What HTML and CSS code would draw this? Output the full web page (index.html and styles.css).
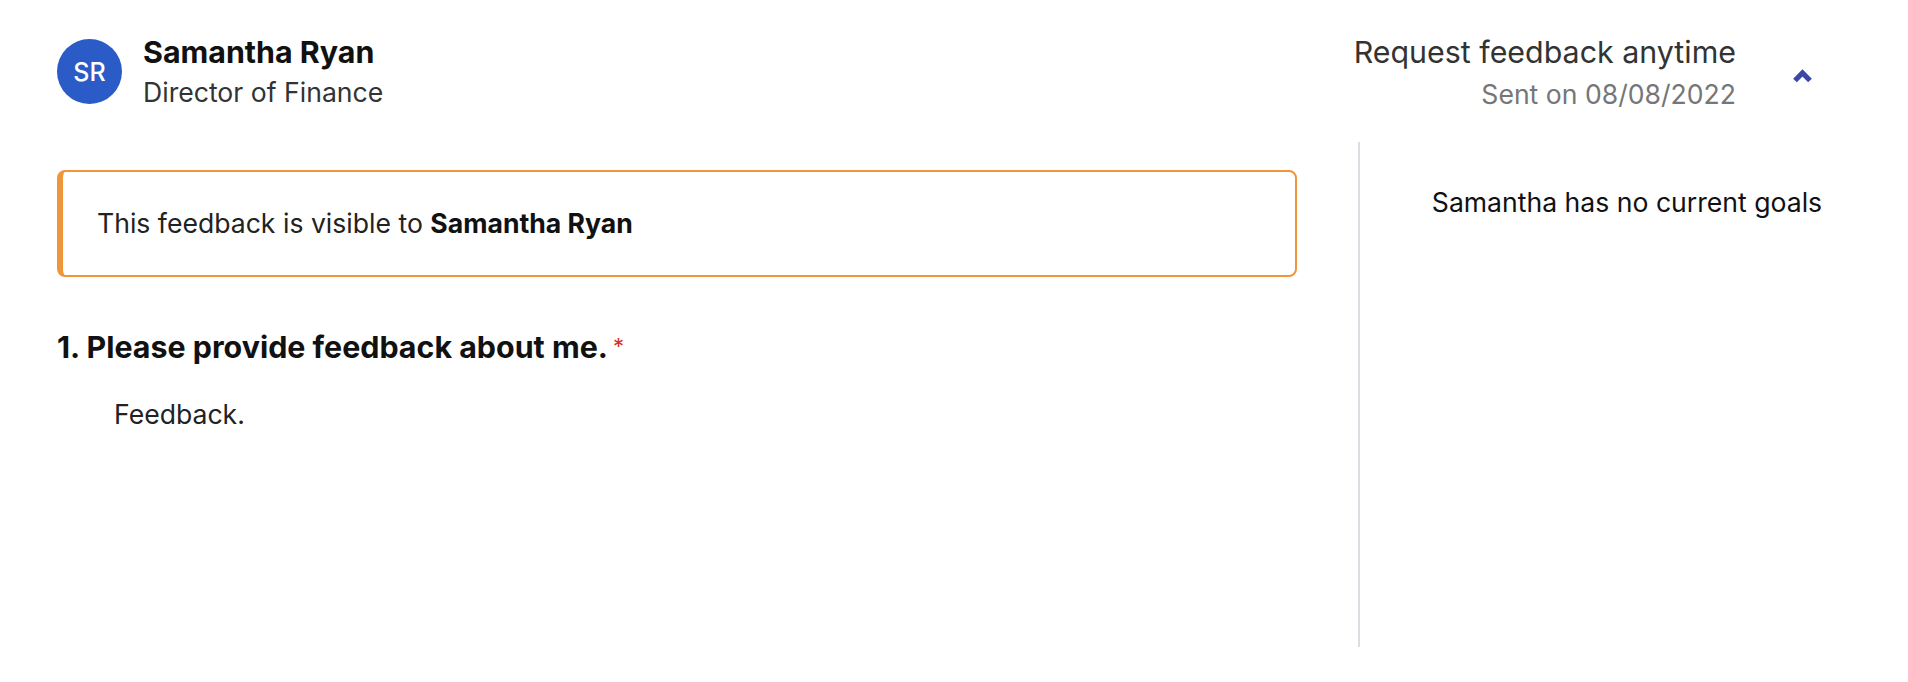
FILE: index.html
```html
<!DOCTYPE html>
<html lang="en">
<head>
<meta charset="utf-8">
<title>Feedback</title>
<link rel="stylesheet" href="styles.css">
</head>
<body>
<div class="page">
  <header class="header">
    <div class="person">
      <div class="avatar">SR</div>
      <div class="person-text">
        <div class="name">Samantha Ryan</div>
        <div class="role">Director of Finance</div>
      </div>
    </div>
    <div class="request">
      <div class="request-text">
        <div class="request-title">Request feedback anytime</div>
        <div class="request-date">Sent on 08/08/2022</div>
      </div>
      <button class="toggle" type="button" aria-label="Collapse">
        <svg width="21" height="16" viewBox="0 0 21 16"><path d="M3 13.5 L10.5 6 L18 13.5" fill="none" stroke="#3a46a8" stroke-width="5.2" stroke-linejoin="miter" stroke-linecap="butt"/></svg>
      </button>
    </div>
  </header>
  <main class="content">
    <section class="form">
      <div class="notice">This feedback is visible to <strong>Samantha Ryan</strong></div>
      <div class="question"><span class="question-text">1. Please provide feedback about me.</span><span class="req">*</span></div>
      <p class="answer">Feedback.</p>
    </section>
    <aside class="goals">
      <p class="goals-empty">Samantha has no current goals</p>
    </aside>
  </main>
</div>
</body>
</html>
```

FILE: styles.css
```css
* { box-sizing: border-box; }
body {
  margin: 0;
  background: #fff;
  font-family: Inter, "Open Sans", Arial, sans-serif;
  color: #1a1a1a;
}
.header {
  display: flex;
  justify-content: space-between;
  align-items: flex-start;
  padding: 34px 95px 0 57px;
  height: 110px;
}
.person { display: flex; align-items: center; }
.avatar {
  width: 65px;
  height: 65px;
  border-radius: 50%;
  background: #2b5bc7;
  color: #fff;
  font-size: 25px;
  font-weight: 500;
  display: flex;
  align-items: center;
  justify-content: center;
  margin-right: 21px;
}
.person-text { display: flex; flex-direction: column; align-items: flex-start; }
.name { font-size: 30.4px; line-height: 36px; font-weight: 700; color: #111; }
.role { font-size: 26.6px; line-height: 34px; margin-top: 5px; color: #333; }
.request { display: flex; align-items: center; }
.request-text { display: flex; flex-direction: column; align-items: flex-end; }
.request-title { font-size: 30.4px; line-height: 36px; color: #333; }
.request-date { font-size: 26.6px; line-height: 34px; margin-top: 7px; color: #767676; }
.toggle {
  border: 0;
  background: none;
  padding: 0;
  margin-left: 56px;
  margin-top: 4px;
  width: 21px;
  height: 16px;
  display: flex;
  cursor: pointer;
}
.content {
  display: flex;
  margin-top: 32px;
  padding: 0 14px 0 57px;
}
.form { width: 1240px; padding-top: 28px; }
.notice {
  border: 2px solid #f0963a;
  border-left-width: 6px;
  border-radius: 8px;
  padding: 34px 34px 35px;
  font-size: 26.6px;
  line-height: 34px;
  color: #222;
}
.notice strong { font-weight: 700; color: #111; }
.question { display: flex; align-items: flex-start; margin-top: 52px; }
.question-text { font-size: 30.4px; line-height: 36px; font-weight: 700; color: #111; }
.req { color: #d2302a; font-size: 22px; line-height: 22px; margin: 6px 0 0 5px; }
.answer { margin: 32px 0 0 57px; font-size: 26.6px; line-height: 34px; color: #222; }
.goals {
  flex: 1;
  margin-left: 61px;
  border-left: 2px solid #dcdce2;
  height: 505px;
  text-align: center;
  padding-top: 43px;
}
.goals-empty { margin: 0; font-size: 26.6px; line-height: 34px; color: #111; }
```
